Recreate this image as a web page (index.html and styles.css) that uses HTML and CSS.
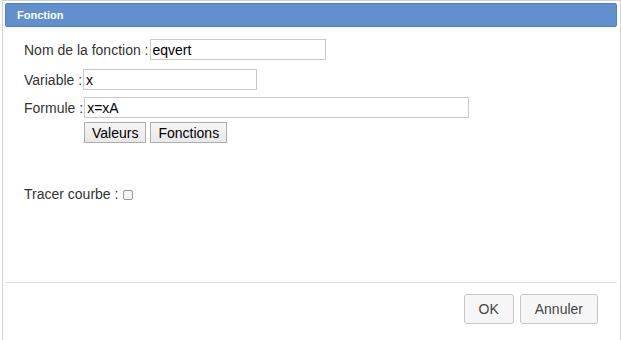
FILE: index.html
```html
<!DOCTYPE html>
<html lang="fr">

<head>
    <meta charset="UTF-8">
    <title>Fonction</title>
    <link rel="stylesheet" href="styles.css">
</head>

<body>
    <div class="dialog">
        <div class="titlebar"><span class="title">Fonction</span></div>
        <div class="content">
            <div class="row row-name">
                <label>Nom de la fonction :</label>
                <input type="text" class="field field-name" value="eqvert">
            </div>
            <div class="row row-var">
                <label>Variable :</label>
                <input type="text" class="field field-var" value="x">
            </div>
            <div class="row row-form">
                <label>Formule :</label>
                <input type="text" class="field field-form" value="x=xA">
            </div>
            <div class="tools">
                <button class="tool">Valeurs</button>
                <button class="tool">Fonctions</button>
            </div>
            <div class="row row-trace">
                <label>Tracer courbe :</label>
                <input type="checkbox" class="check">
            </div>
        </div>
        <div class="buttonpane">
            <button class="action">OK</button>
            <button class="action">Annuler</button>
        </div>
    </div>
</body>

</html>
```

FILE: styles.css
```css
* {
    box-sizing: border-box;
    margin: 0;
    padding: 0;
}

body {
    font-family: "Liberation Sans", Arial, sans-serif;
    background: #fff;
    color: #333;
    font-size: 14px;
    overflow: hidden;
}

.dialog {
    width: 619px;
    height: 340px;
    margin-left: 2px;
    padding: 2px 3px 0 2px;
    border: 1px solid #d3d3d3;
    border-bottom: none;
    background: #fff;
}

.titlebar {
    height: 24px;
    background: #6190ce;
    border: 1px solid #4b80d4;
    border-radius: 2px;
    padding-left: 11px;
    display: flex;
    align-items: center;
}

.title {
    color: #fff;
    font-size: 11px;
    font-weight: bold;
}

.content {
    height: 255px;
    padding: 12px 0 0 19px;
}

.row {
    display: flex;
    align-items: center;
    gap: 1px;
}

.row-var {
    margin-top: 9px;
}

.row-form {
    margin-top: 7px;
}

.field {
    height: 21px;
    border: 1px solid #c8c8c8;
    font-family: "Liberation Sans", Arial, sans-serif;
    font-size: 14px;
    color: #000;
    padding: 0 2px;
    outline: none;
}

.field-name {
    width: 176px;
}

.field-var {
    width: 174px;
}

.field-form {
    width: 385px;
}

.tools {
    display: flex;
    gap: 4px;
    margin: 4px 0 0 60px;
}

.tool {
    height: 21px;
    padding: 0 7px;
    border: 1px solid #adadad;
    background: linear-gradient(#f6f6f6, #e8e8e8);
    font-family: "Liberation Sans", Arial, sans-serif;
    font-size: 14px;
    color: #000;
}

.row-trace {
    margin-top: 43px;
    gap: 5px;
}

.check {
    appearance: none;
    width: 10px;
    height: 10px;
    border: 1px solid #9a9a9a;
    border-radius: 2px;
    background: #f3f3f3;
    margin-top: 1px;
}

.buttonpane {
    border-top: 1px solid #e0e0e0;
    display: flex;
    justify-content: flex-end;
    gap: 6px;
    padding: 11px 19px 0 0;
}

.action {
    height: 30px;
    padding: 0 14px;
    border: 1px solid #c5c5c5;
    border-radius: 3px;
    background: #f6f6f6;
    font-family: "Liberation Sans", Arial, sans-serif;
    font-size: 14px;
    color: #454545;
}
```
